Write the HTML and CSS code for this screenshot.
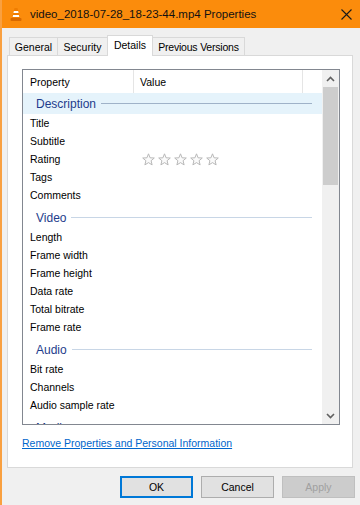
FILE: index.html
```html
<!DOCTYPE html>
<html lang="en">
<head>
    <meta charset="UTF-8">
    <title>video_2018-07-28_18-23-44.mp4 Properties</title>
    <link rel="stylesheet" href="styles.css">
</head>
<body>
<div class="window">
    <div class="titlebar">
        <svg class="app-icon" width="12" height="15" viewBox="0 0 12 15">
            <polygon points="4.5,1 7.5,1 10,11 2,11" fill="#f07d00"/>
            <polygon points="3.9,4 8.1,4 8.6,6 3.4,6" fill="#fff"/>
            <polygon points="3.1,8 8.9,8 9.4,10 2.6,10" fill="#fff"/>
            <rect x="0.5" y="11" width="11" height="3" rx="1" fill="#d96a00"/>
        </svg>
        <span class="title">video_2018-07-28_18-23-44.mp4 Properties</span>
        <svg class="close" width="11" height="11" viewBox="0 0 11 11">
            <path d="M0.5 0.5 L10.5 10.5 M10.5 0.5 L0.5 10.5" stroke="#1a1a1a" stroke-width="1.1"/>
        </svg>
    </div>

    <div class="tabs">
        <div class="tab tab-general">General</div>
        <div class="tab tab-security">Security</div>
        <div class="tab tab-details active">Details</div>
        <div class="tab tab-previous">Previous Versions</div>
    </div>

    <div class="panel">
        <div class="listbox">
            <div class="list-main">
                <div class="list-header">
                    <div class="col-prop">Property</div>
                    <div class="col-value">Value</div>
                </div>
                <div class="list-body">
                    <div class="group first selected"><span>Description</span><i></i></div>
                    <div class="row">Title</div>
                    <div class="row">Subtitle</div>
                    <div class="row">
                        <span class="row-name">Rating</span>
                        <span class="stars">
                            <svg width="13" height="13" viewBox="0 0 13 13"><polygon points="6.5,0.8 8.1,4.8 12.3,5 9.1,7.7 10.1,11.9 6.5,9.6 2.9,11.9 3.9,7.7 0.7,5 4.9,4.8"/></svg>
                            <svg width="13" height="13" viewBox="0 0 13 13"><polygon points="6.5,0.8 8.1,4.8 12.3,5 9.1,7.7 10.1,11.9 6.5,9.6 2.9,11.9 3.9,7.7 0.7,5 4.9,4.8"/></svg>
                            <svg width="13" height="13" viewBox="0 0 13 13"><polygon points="6.5,0.8 8.1,4.8 12.3,5 9.1,7.7 10.1,11.9 6.5,9.6 2.9,11.9 3.9,7.7 0.7,5 4.9,4.8"/></svg>
                            <svg width="13" height="13" viewBox="0 0 13 13"><polygon points="6.5,0.8 8.1,4.8 12.3,5 9.1,7.7 10.1,11.9 6.5,9.6 2.9,11.9 3.9,7.7 0.7,5 4.9,4.8"/></svg>
                            <svg width="13" height="13" viewBox="0 0 13 13"><polygon points="6.5,0.8 8.1,4.8 12.3,5 9.1,7.7 10.1,11.9 6.5,9.6 2.9,11.9 3.9,7.7 0.7,5 4.9,4.8"/></svg>
                        </span>
                    </div>
                    <div class="row">Tags</div>
                    <div class="row">Comments</div>

                    <div class="group"><span>Video</span><i></i></div>
                    <div class="row">Length</div>
                    <div class="row">Frame width</div>
                    <div class="row">Frame height</div>
                    <div class="row">Data rate</div>
                    <div class="row">Total bitrate</div>
                    <div class="row">Frame rate</div>

                    <div class="group"><span>Audio</span><i></i></div>
                    <div class="row">Bit rate</div>
                    <div class="row">Channels</div>
                    <div class="row">Audio sample rate</div>

                    <div class="group"><span>Media</span><i></i></div>
                </div>
            </div>
            <div class="scrollbar">
                <div class="arrow">
                    <svg width="9" height="6" viewBox="0 0 9 6"><path d="M1 5 L4.5 1.5 L8 5" fill="none" stroke="#606060" stroke-width="1.6"/></svg>
                </div>
                <div class="track">
                    <div class="thumb"></div>
                </div>
                <div class="arrow">
                    <svg width="9" height="6" viewBox="0 0 9 6"><path d="M1 1 L4.5 4.5 L8 1" fill="none" stroke="#606060" stroke-width="1.6"/></svg>
                </div>
            </div>
        </div>

        <a class="remove-link" href="#">Remove Properties and Personal Information</a>
    </div>

    <div class="buttons">
        <button class="btn default">OK</button>
        <button class="btn">Cancel</button>
        <button class="btn" disabled>Apply</button>
    </div>
</div>
</body>
</html>
```

FILE: styles.css
```css
body {
    margin: 0;
    background-color: #f0f0f0;
    font-family: 'Liberation Sans', Arial, sans-serif;
    font-size: 10.5px;
    color: #000;
}

.window {
    width: 360px;
    height: 505px;
    box-sizing: border-box;
    border-left: 2px solid #f9a040;
    overflow: hidden;
}

/* Title bar */
.titlebar {
    height: 28px;
    background-color: #fb8c0c;
    display: flex;
    align-items: center;
    margin-left: -2px;
    padding-left: 10px;
}

.app-icon {
    margin-right: 8px;
}

.title {
    flex: 1;
    font-size: 11.5px;
    color: #111;
}

.close {
    margin-right: 8px;
}

/* Tabs */
.tabs {
    display: flex;
    align-items: flex-end;
    height: 27px;
    padding-left: 7px;
}

.tab {
    height: 18px;
    line-height: 18px;
    text-align: center;
    border: 1px solid #d9d9d9;
    border-bottom: none;
    border-right: none;
    background-color: #f0f0f0;
    box-sizing: border-box;
}

.tab-general { width: 48px; }
.tab-security { width: 50px; }
.tab-details { width: 46px; }
.tab-previous { width: 92px; letter-spacing: -0.2px; }

.tab:last-child {
    border-right: 1px solid #d9d9d9;
}

.tab.active {
    height: 21px;
    line-height: 19px;
    background-color: #fff;
    border-right: 1px solid #d9d9d9;
    position: relative;
    top: 1px;
}

.tab.active + .tab {
    border-left: none;
}

/* Panel */
.panel {
    margin-left: 5px;
    width: 346px;
    height: 413px;
    box-sizing: border-box;
    background-color: #fff;
    border: 1px solid #d9d9d9;
    padding: 13px 0 0 14px;
}

.listbox {
    width: 318px;
    height: 356px;
    box-sizing: border-box;
    border: 1px solid #828790;
    display: flex;
}

.list-main {
    flex: 1;
    overflow: hidden;
}

.list-header {
    display: flex;
    height: 23px;
    line-height: 24px;
}

.col-prop {
    width: 111px;
    padding-left: 7px;
    box-sizing: border-box;
    border-right: 1px solid #e5e5e5;
}

.col-value {
    width: 169px;
    padding-left: 6px;
    box-sizing: border-box;
    border-right: 1px solid #e5e5e5;
}

.list-body {
    height: 331px;
    overflow: hidden;
}

.group {
    display: flex;
    align-items: center;
    height: 21px;
    margin-top: 3px;
    padding: 0 10px 0 13px;
    font-size: 12px;
    color: #1e3c8c;
}

.group.first {
    margin-top: 0;
}

.group.selected {
    background-color: #e5f3fb;
}

.group i {
    flex: 1;
    height: 1px;
    margin-left: 5px;
    background-color: #c8d6e6;
}

.group.selected i {
    background-color: #9fb2c8;
}

.row {
    display: flex;
    align-items: center;
    height: 18px;
    padding-left: 7px;
}

.row-name {
    width: 112px;
}

.stars {
    display: flex;
    gap: 3px;
}

.stars polygon {
    fill: #fafafa;
    stroke: #b8b8b8;
    stroke-width: 1;
}

/* Scrollbar */
.scrollbar {
    width: 17px;
    background-color: #f0f0f0;
    display: flex;
    flex-direction: column;
}

.arrow {
    height: 17px;
    display: flex;
    align-items: center;
    justify-content: center;
}

.track {
    flex: 1;
}

.thumb {
    height: 98px;
    margin: 0 1px;
    background-color: #cdcdcd;
}

.remove-link {
    display: inline-block;
    margin-top: 12px;
    color: #0066cc;
    text-decoration: underline;
}

/* Buttons */
.buttons {
    display: flex;
    justify-content: flex-end;
    gap: 8px;
    padding: 8px 5px 0 0;
}

.btn {
    width: 73px;
    height: 22px;
    margin: 0;
    padding: 0;
    font-family: inherit;
    font-size: 10.5px;
    color: #000;
    background-color: #e1e1e1;
    border: 1px solid #adadad;
}

.btn.default {
    border: 2px solid #0078d7;
}

.btn:disabled {
    color: #a0a0a0;
    background-color: #cccccc;
    border-color: #bfbfbf;
}
```
